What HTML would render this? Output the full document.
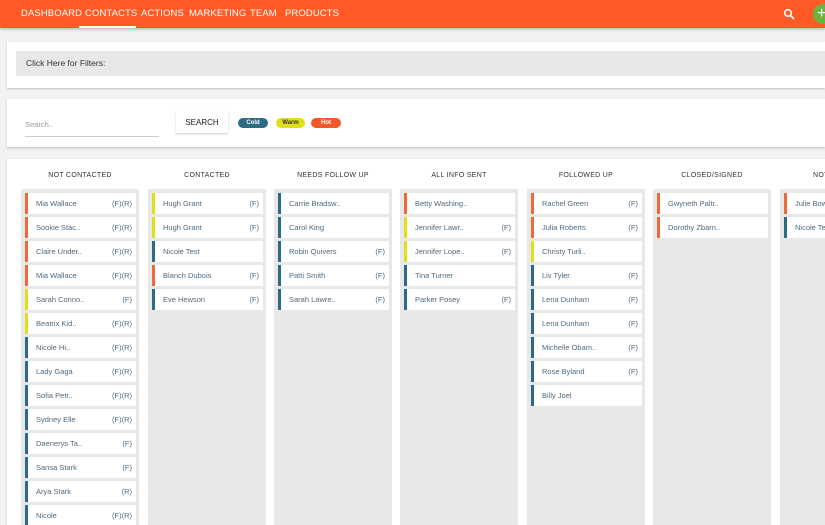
<!DOCTYPE html><html style="overflow:hidden;width:825px;height:525px"><head><style>
body{margin:0;width:825px;height:525px;overflow:hidden;background:#f2f2f2;font-family:"Liberation Sans",sans-serif;position:relative}
.nav{position:absolute;left:0;top:0;width:825px;height:28px;background:#ff5a26;box-shadow:0 1px 3px rgba(0,0,0,.3)}
.nav span{position:absolute;top:8px;color:#fff;font-size:9.5px;letter-spacing:.1px}
.ul{position:absolute;left:79px;top:26px;width:57px;height:2px;background:#fff}
.p{position:absolute;background:#fff;box-shadow:0 1px 2px rgba(0,0,0,.2)}
.col{position:absolute;top:189px;width:118px;height:336px;background:#e8e8e8;overflow:hidden}
.h{position:absolute;top:172px;width:118px;text-align:center;font-size:7px;color:#333;letter-spacing:.3px;white-space:nowrap}
.c{position:absolute;left:4px;width:111px;height:21px;background:#fff;border-left:3px solid;box-sizing:border-box;font-size:7.5px;color:#4d6a80;line-height:21px;padding-left:8px;white-space:nowrap;overflow:hidden}
.c b{position:absolute;right:4px;font-weight:normal}
.o{border-color:#ee6a3a}.y{border-color:#dfe01a}.bl{border-color:#2c6b84}
.tag{position:absolute;top:118px;height:10px;border-radius:5px;font-size:6px;line-height:11px;text-align:center;font-weight:bold}
</style></head><body>
<div class="nav">
<span style="left:21px">DASHBOARD</span><span style="left:85px">CONTACTS</span><span style="left:141px">ACTIONS</span><span style="left:189px">MARKETING</span><span style="left:250px">TEAM</span><span style="left:285px">PRODUCTS</span>
<div class="ul"></div>
<svg style="position:absolute;left:783px;top:8px" width="12" height="12"><circle cx="5" cy="5" r="3.3" stroke="#fff" stroke-width="1.6" fill="none"/><path d="M7.5 7.5L11 11" stroke="#fff" stroke-width="1.8"/></svg>
<div style="position:absolute;left:813px;top:4px;width:20px;height:20px;border-radius:50%;background:#6cb33f;color:#fff;font-size:16px;line-height:19px;text-indent:4px">+</div>
</div>
<div class="p" style="left:7px;top:42px;width:818px;height:46px"><div style="position:absolute;left:9px;top:9px;width:809px;height:25px;background:#e8e8e8;font-size:8.5px;color:#333;line-height:25px;text-indent:10px">Click Here for Filters:</div></div>
<div class="p" style="left:7px;top:99px;width:818px;height:48px"></div>
<div style="position:absolute;left:25px;top:120px;font-size:7.5px;color:#999">Search..</div>
<div style="position:absolute;left:25px;top:136px;width:134px;height:1px;background:#ccc"></div>
<div class="p" style="left:176px;top:112px;width:52px;height:21px;font-size:8px;color:#222;text-align:center;line-height:21px">SEARCH</div>
<div class="tag" style="left:238px;width:30px;background:#2c6b84;color:#fff">Cold</div>
<div class="tag" style="left:276px;width:29px;background:#dfe01a;color:#333">Warm</div>
<div class="tag" style="left:311px;width:30px;background:#f05a28;color:#fff">Hot</div>
<div class="p" style="left:7px;top:159px;width:818px;height:366px"></div>
<div class="h" style="left:21px">NOT CONTACTED</div><div class="h" style="left:148px">CONTACTED</div><div class="h" style="left:274px">NEEDS FOLLOW UP</div><div class="h" style="left:400px">ALL INFO SENT</div><div class="h" style="left:527px">FOLLOWED UP</div><div class="h" style="left:653px">CLOSED/SIGNED</div><div class="h" style="left:780px;width:45px;overflow:hidden;text-align:left;text-indent:33px">NOT INTERESTED</div>
<div class="col" style="left:21px">
<div class="c o" style="top:4px">Mia Wallace<b>(F)(R)</b></div>
<div class="c o" style="top:28px">Sookie Stac..<b>(F)(R)</b></div>
<div class="c o" style="top:52px">Claire Under..<b>(F)(R)</b></div>
<div class="c o" style="top:76px">Mia Wallace<b>(F)(R)</b></div>
<div class="c y" style="top:100px">Sarah Conno..<b>(F)</b></div>
<div class="c y" style="top:124px">Beatrix Kid..<b>(F)(R)</b></div>
<div class="c bl" style="top:148px">Nicole Hi..<b>(F)(R)</b></div>
<div class="c bl" style="top:172px">Lady Gaga<b>(F)(R)</b></div>
<div class="c bl" style="top:196px">Sofia Petr..<b>(F)(R)</b></div>
<div class="c bl" style="top:220px">Sydney Elle<b>(F)(R)</b></div>
<div class="c bl" style="top:244px">Daenerys Ta..<b>(F)</b></div>
<div class="c bl" style="top:268px">Sansa Stark<b>(F)</b></div>
<div class="c bl" style="top:292px">Arya Stark<b>(R)</b></div>
<div class="c bl" style="top:316px">Nicole<b>(F)(R)</b></div>
</div>
<div class="col" style="left:148px">
<div class="c y" style="top:4px">Hugh Grant<b>(F)</b></div>
<div class="c y" style="top:28px">Hugh Grant<b>(F)</b></div>
<div class="c bl" style="top:52px">Nicole Test</div>
<div class="c o" style="top:76px">Blanch Dubois<b>(F)</b></div>
<div class="c bl" style="top:100px">Eve Hewson<b>(F)</b></div>
</div>
<div class="col" style="left:274px">
<div class="c bl" style="top:4px">Carrie Bradsw..</div>
<div class="c bl" style="top:28px">Carol King</div>
<div class="c bl" style="top:52px">Robin Quivers<b>(F)</b></div>
<div class="c bl" style="top:76px">Patti Smith<b>(F)</b></div>
<div class="c bl" style="top:100px">Sarah Lawre..<b>(F)</b></div>
</div>
<div class="col" style="left:400px">
<div class="c o" style="top:4px">Betty Washing..</div>
<div class="c y" style="top:28px">Jennifer Lawr..<b>(F)</b></div>
<div class="c y" style="top:52px">Jennifer Lope..<b>(F)</b></div>
<div class="c bl" style="top:76px">Tina Turner</div>
<div class="c bl" style="top:100px">Parker Posey<b>(F)</b></div>
</div>
<div class="col" style="left:527px">
<div class="c o" style="top:4px">Rachel Green<b>(F)</b></div>
<div class="c o" style="top:28px">Julia Roberts<b>(F)</b></div>
<div class="c y" style="top:52px">Christy Turli..</div>
<div class="c bl" style="top:76px">Liv Tyler<b>(F)</b></div>
<div class="c bl" style="top:100px">Lena Dunham<b>(F)</b></div>
<div class="c bl" style="top:124px">Lena Dunham<b>(F)</b></div>
<div class="c bl" style="top:148px">Michelle Obam..<b>(F)</b></div>
<div class="c bl" style="top:172px">Rose Byland<b>(F)</b></div>
<div class="c bl" style="top:196px">Billy Joel</div>
</div>
<div class="col" style="left:653px">
<div class="c o" style="top:4px">Gwyneth Paltr..</div>
<div class="c o" style="top:28px">Dorothy Zbarn..</div>
</div>
<div class="col" style="left:780px;width:45px">
<div class="c o" style="top:4px">Julie Bowen</div>
<div class="c bl" style="top:28px">Nicole Test</div>
</div>
</body></html>
